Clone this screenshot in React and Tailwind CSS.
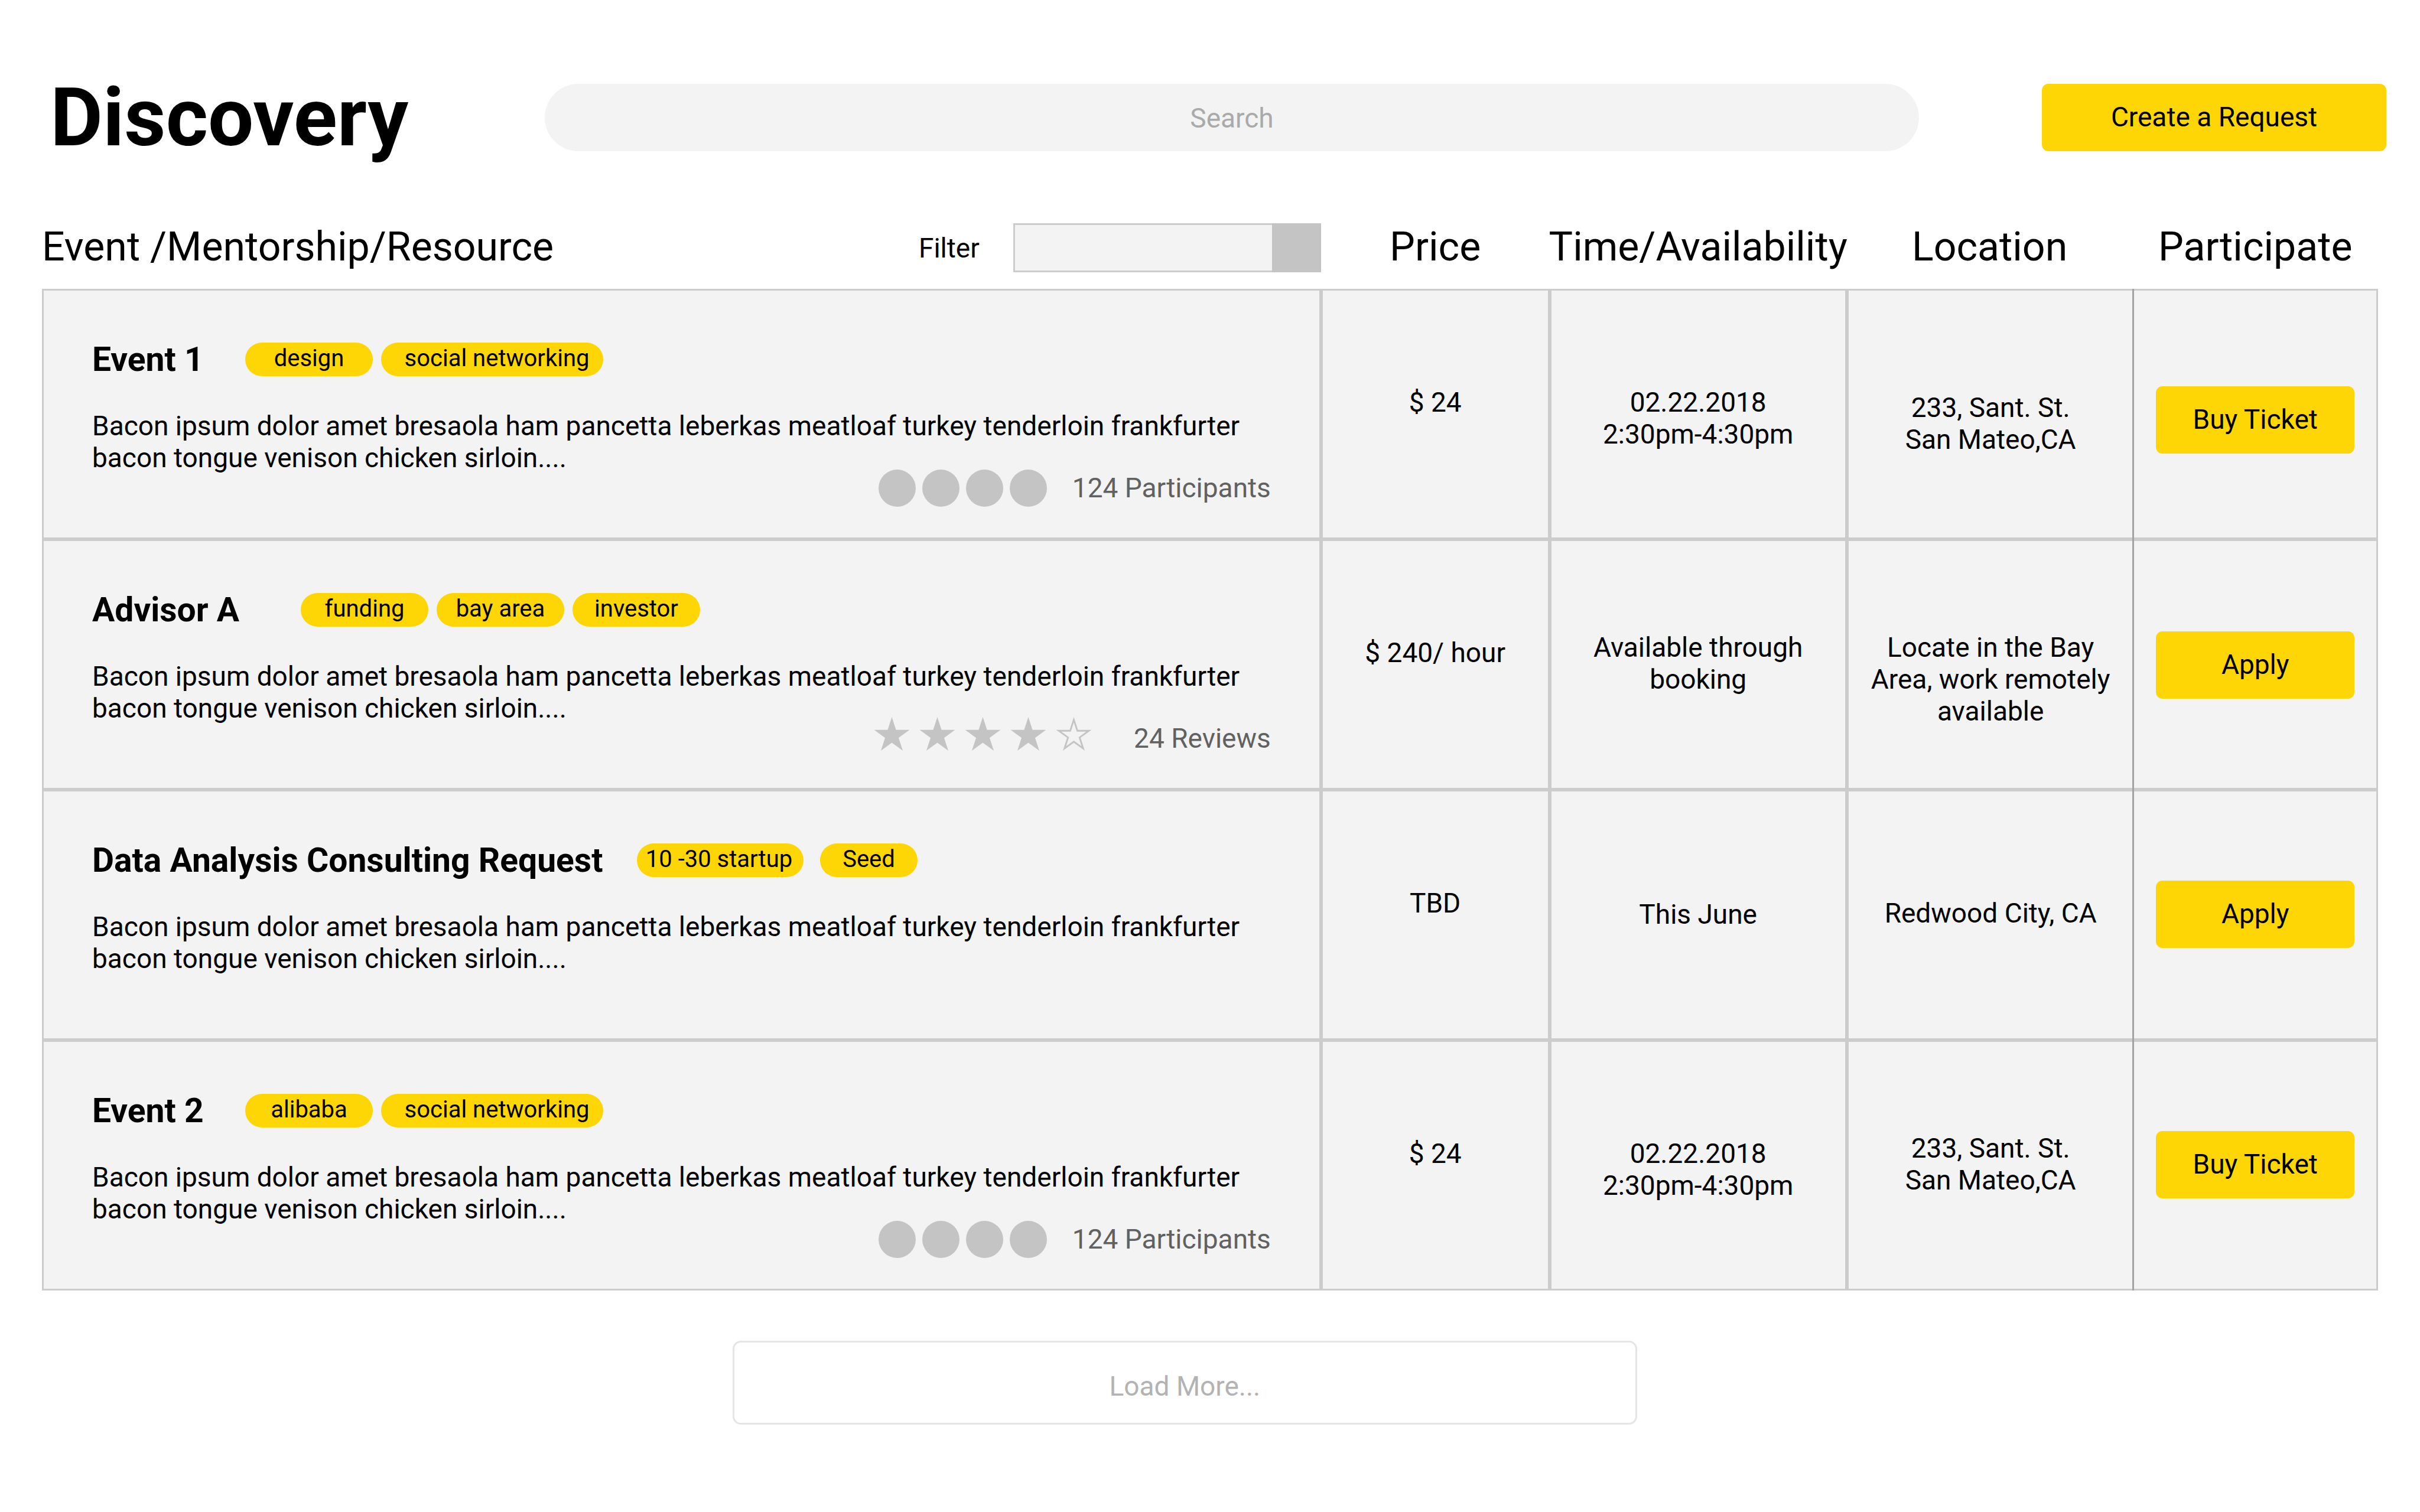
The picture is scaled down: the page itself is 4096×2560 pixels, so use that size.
import React from "react";

const BLURB =
  "Bacon ipsum dolor amet bresaola ham pancetta leberkas meatloaf turkey tenderloin frankfurter bacon tongue venison chicken sirloin....";

const ROWS = [
  {
    title: "Event 1",
    titleWidth: "min-w-[259px]",
    tagGap: "gap-[14px]",
    tags: [
      { label: "design", width: "w-[216px]" },
      { label: "social networking", width: "w-[376px] pl-4" },
    ],
    participants: "124 Participants",
    price: "$ 24",
    time: ["02.22.2018", "2:30pm-4:30pm"],
    timeTop: "pt-[162px]",
    location: ["233, Sant. St.", "San Mateo,CA"],
    locationTop: "pt-[171px]",
    action: "Buy Ticket",
    actionTop: "pt-[162px]",
  },
  {
    title: "Advisor A",
    titleWidth: "min-w-[353px]",
    tagGap: "gap-[14px]",
    tags: [
      { label: "funding", width: "w-[216px]" },
      { label: "bay area", width: "w-[216px]" },
      { label: "investor", width: "w-[216px]" },
    ],
    rating: 4,
    reviews: "24 Reviews",
    price: "$ 240/ hour",
    time: ["Available through", "booking"],
    timeTop: "pt-[153px]",
    location: ["Locate in the Bay", "Area, work remotely", "available"],
    locationTop: "pt-[153px]",
    action: "Apply",
    actionTop: "pt-[153px]",
  },
  {
    title: "Data Analysis Consulting Request",
    titleWidth: "min-w-[922px]",
    tagGap: "gap-[28px]",
    tags: [
      { label: "10 -30 startup", width: "w-[282px] pr-1" },
      { label: "Seed", width: "w-[165px]" },
    ],
    price: "TBD",
    time: ["This June"],
    timeTop: "pt-[181px]",
    location: ["Redwood City, CA"],
    locationTop: "pt-[179px]",
    action: "Apply",
    actionTop: "pt-[151px]",
  },
  {
    title: "Event 2",
    titleWidth: "min-w-[259px]",
    tagGap: "gap-[14px]",
    tags: [
      { label: "alibaba", width: "w-[216px]" },
      { label: "social networking", width: "w-[376px] pl-4" },
    ],
    participants: "124 Participants",
    price: "$ 24",
    time: ["02.22.2018", "2:30pm-4:30pm"],
    timeTop: "pt-[162px]",
    location: ["233, Sant. St.", "San Mateo,CA"],
    locationTop: "pt-[153px]",
    action: "Buy Ticket",
    actionTop: "pt-[151px]",
  },
];

function Star({ filled }) {
  return (
    <svg viewBox="0 0 22 22" className="size-[63px]" aria-hidden="true">
      {filled ? (
        <path
          fill="#c4c4c4"
          d="M11 0L13.47 7.6H21.46L15 12.3L17.47 19.9L11 15.2L4.53 19.9L7 12.3L0.54 7.6H8.53Z"
        />
      ) : (
        <path
          fill="none"
          stroke="#c4c4c4"
          strokeWidth="1"
          d="M11 1.62L13.11 8.1H19.92L14.41 12.11L16.52 18.59L11 14.58L5.48 18.59L7.59 12.11L2.08 8.1H8.89Z"
        />
      )}
    </svg>
  );
}

function Tag({ label, width }) {
  return (
    <li
      className={`${width} flex h-[57px] items-center justify-center rounded-full bg-[#ffd605] pb-1 text-[40px] leading-[47px] whitespace-nowrap`}
    >
      {label}
    </li>
  );
}

function Lines({ lines }) {
  return lines.map((line) => (
    <span key={line} className="block whitespace-nowrap">
      {line}
    </span>
  ));
}

function ListingRow({ row }) {
  const cell = "border-[3px] border-[#ccc] bg-[#f3f3f3] pr-0 pb-0 align-top";
  return (
    <tr className="h-[424px]">
      <td className={`${cell} pt-0 pl-0`}>
        <div className="px-[82px] pt-[88px]">
          <div className="flex items-center">
            <h2 className={`${row.titleWidth} text-left text-[57px] leading-[57px] font-bold whitespace-nowrap`}>
              {row.title}
            </h2>
            <ul className={`flex ${row.tagGap}`}>
              {row.tags.map((tag) => (
                <Tag key={tag.label} {...tag} />
              ))}
            </ul>
          </div>
          <p className="mt-[57px] text-left leading-[54px]">{BLURB}</p>
          {row.participants && (
            <div className="-mt-[7px] flex items-center justify-end gap-[43px] text-[#616161]">
              <div className="flex gap-[11px]">
                {[0, 1, 2, 3].map((n) => (
                  <span key={n} className="size-[63px] rounded-full bg-[#c4c4c4]" />
                ))}
              </div>
              <span className="pb-0.5">{row.participants}</span>
            </div>
          )}
          {row.reviews && (
            <div className="-mt-3 flex items-center justify-end gap-[70px] text-[#616161]">
              <div className="flex gap-[14px]" role="img" aria-label={`${row.rating} out of 5 stars`}>
                {[0, 1, 2, 3, 4].map((n) => (
                  <Star key={n} filled={n < row.rating} />
                ))}
              </div>
              <span className="pt-2">{row.reviews}</span>
            </div>
          )}
        </div>
      </td>
      <td className={`${cell} pt-[162px] pl-0`}>{row.price}</td>
      <td className={`${cell} pl-0 ${row.timeTop}`}>
        <Lines lines={row.time} />
      </td>
      <td className={`${cell} border-r-0 pl-0 ${row.locationTop}`}>
        <Lines lines={row.location} />
      </td>
      <td
        className={`${cell} relative border-l-0 pl-[3px] before:absolute before:-top-[3px] before:-bottom-[3px] before:left-0 before:w-[3px] before:bg-[#a3a3a3] ${row.actionTop}`}
      >
        <button
          type="button"
          className="mx-auto block h-[114px] w-[336px] rounded-[11px] bg-[#ffd605] pb-0.5"
        >
          {row.action}
        </button>
      </td>
    </tr>
  );
}

export default function App() {
  const heading = "p-0 align-top font-normal";
  const headingText = "flex h-[83px] items-center justify-center pb-1 text-[68px] whitespace-nowrap";
  return (
    <main className="min-h-screen bg-white pt-[142px] pb-[149px] font-[Roboto,sans-serif] text-[46px] leading-[54px] text-black">
      <header className="flex items-center pr-[57px] pl-[85px]">
        <h1 className="min-w-[837px] text-[137px] leading-[114px] font-bold">Discovery</h1>
        <input
          type="text"
          aria-label="Search"
          placeholder="Search"
          className="h-[114px] min-w-0 flex-1 appearance-none rounded-full bg-[#f3f3f3] px-[57px] pt-0.5 text-center outline-none placeholder:text-[#aaa]"
        />
        <button
          type="button"
          className="ml-[208px] h-[114px] w-[583px] rounded-[11px] bg-[#ffd605] pb-0.5"
        >
          Create a Request
        </button>
      </header>

      <div className="mt-[122px] px-[71px]">
        <table className="w-full table-fixed border-separate border-spacing-0 text-center">
          <colgroup>
            <col className="w-[54.75%]" />
            <col className="w-[9.78%]" />
            <col className="w-[12.73%]" />
            <col className="w-[12.23%]" />
            <col className="w-[10.51%]" />
          </colgroup>
          <thead>
            <tr className="h-[111px]">
              <th className={heading}>
                <div className="flex h-[83px] items-center">
                  <span className="flex-1 pb-1 text-left text-[68px] whitespace-nowrap">
                    Event /Mentorship/Resource
                  </span>
                  <label htmlFor="filter" className="mr-[57px]">
                    Filter
                  </label>
                  <div className="flex h-[83px] w-[521px]">
                    <select
                      id="filter"
                      className="min-w-0 flex-1 appearance-none border-[3px] border-r-0 border-[#ccc] bg-[#f3f3f3] px-4 outline-none"
                    />
                    <span className="w-[83px] bg-[#c4c4c4]" />
                  </div>
                </div>
              </th>
              <th className={heading}>
                <div className={headingText}>Price</div>
              </th>
              <th className={heading}>
                <div className={headingText}>Time/Availability</div>
              </th>
              <th className={heading}>
                <div className={headingText}>Location</div>
              </th>
              <th className={heading}>
                <div className={headingText}>Participate</div>
              </th>
            </tr>
          </thead>
          <tbody>
            {ROWS.map((row) => (
              <ListingRow key={row.title} row={row} />
            ))}
          </tbody>
        </table>
      </div>

      <button
        type="button"
        className="mt-[85px] ml-[30.28%] block h-[142px] w-[37.36%] rounded-[14px] border-[3px] border-[#e5e5e5] bg-white pt-3 text-[#b3b3b3]"
      >
        Load More...
      </button>
    </main>
  );
}
